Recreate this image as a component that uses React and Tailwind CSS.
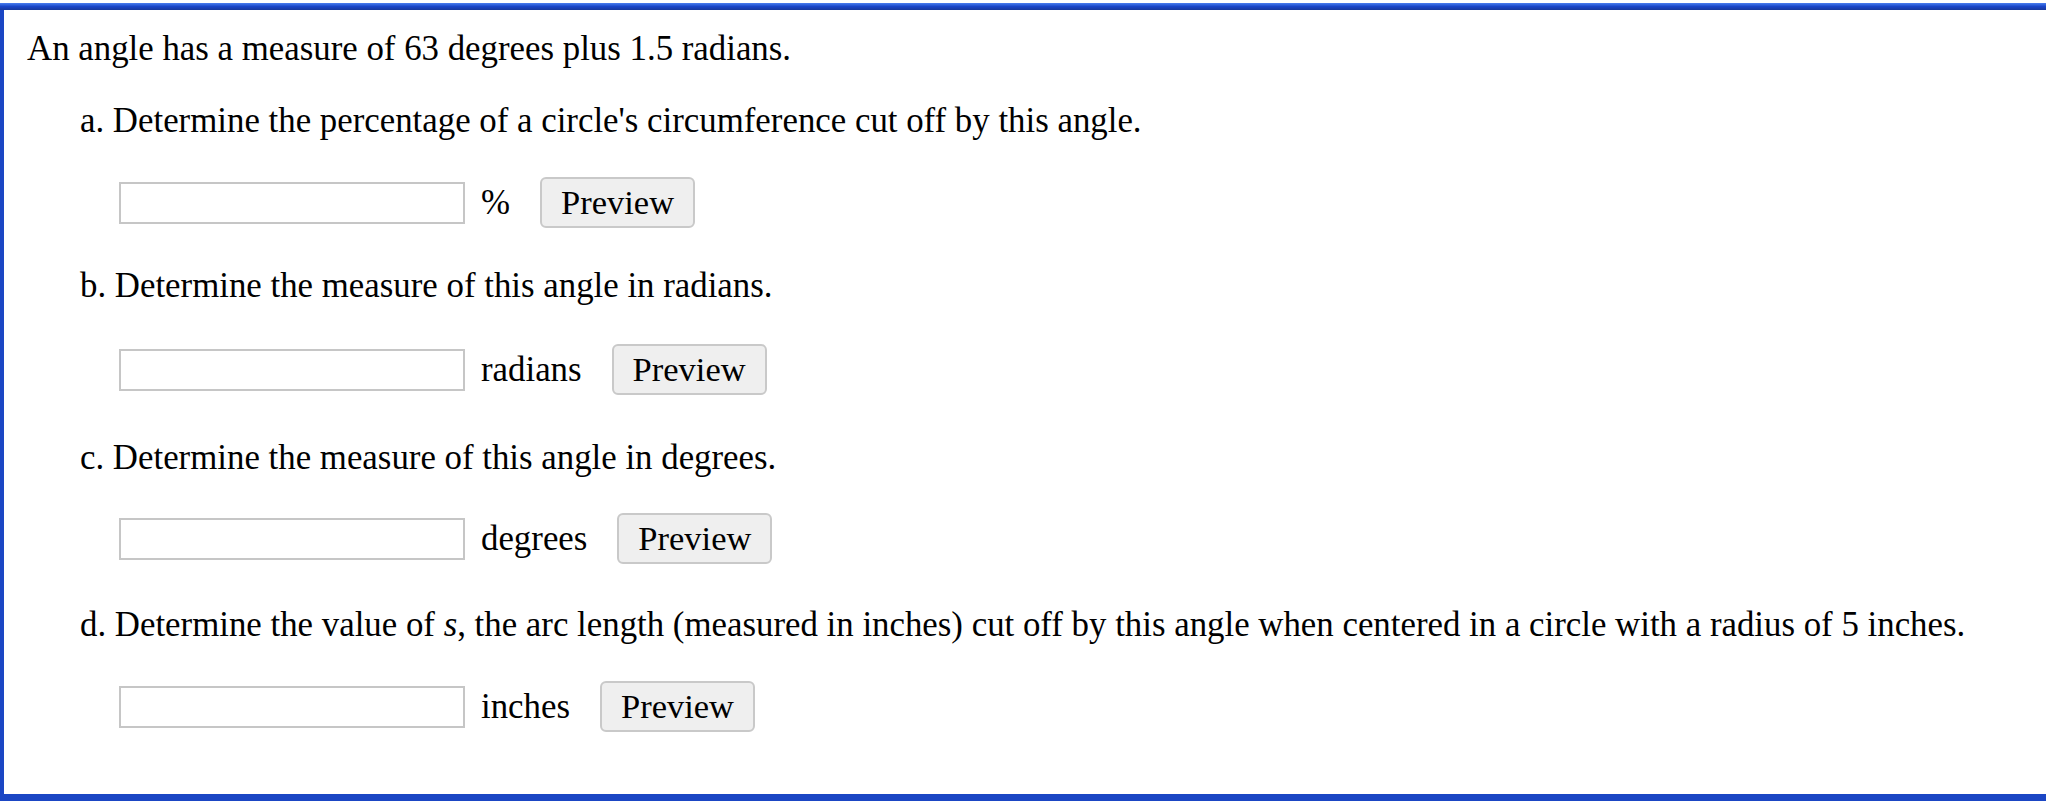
// Angle measure problem — four answer rows, each with an input, a unit and a Preview button.
import React from "react";

const PARTS = [
  { key: "a", textGap: "mt-[32px]", rowGap: "mt-[36px]", unit: "%", text: "a. Determine the percentage of a circle's circumference cut off by this angle." },
  { key: "b", textGap: "mt-[38px]", rowGap: "mt-[38px]", unit: "radians", text: "b. Determine the measure of this angle in radians." },
  { key: "c", textGap: "mt-[43px]", rowGap: "mt-[35px]", unit: "degrees", text: "c. Determine the measure of this angle in degrees." },
  { key: "d", textGap: "mt-[41px]", rowGap: "mt-[36px]", unit: "inches", text: null },
];

function AnswerRow({ unit, gap }) {
  return (
    <div className={`${gap} flex h-[51px] items-center pl-[39px]`}>
      <input type="text" className="h-[42px] w-[346px] border-2 border-[#c6c6c6] bg-white px-2 outline-none" />
      <span className="ml-[16px] leading-[40px]">{unit}</span>
      <button className="ml-[30px] h-[51px] rounded-[6px] border-2 border-[#c9c9c9] bg-[#efefef] px-[19px] text-[34.5px] leading-none">
        Preview
      </button>
    </div>
  );
}

export default function App() {
  return (
    <div className="bg-white font-['Liberation_Serif','Times_New_Roman',serif] text-[34.85px] text-black">
      <div className="mt-[3px] h-[7px] bg-linear-to-b from-[#4a7ef0] via-[#1a46c8] to-[#18399c]" />
      <div className="h-[791px] border-b-[7px] border-l-[4px] border-[#1b46c4] pl-[23px] pt-[19px]">
        <p className="leading-[40px]">An angle has a measure of 63 degrees plus 1.5 radians.</p>
        <div className="pl-[53px]">
          {PARTS.map((p) => (
            <div key={p.key}>
              <p className={`${p.textGap} leading-[40px] whitespace-nowrap`}>
                {p.text ?? (
                  <>
                    d. Determine the value of <i>s</i>, the arc length (measured in inches) cut off by this angle when
                    centered in a circle with a radius of 5 inches.
                  </>
                )}
              </p>
              <AnswerRow unit={p.unit} gap={p.rowGap} />
            </div>
          ))}
        </div>
      </div>
    </div>
  );
}
